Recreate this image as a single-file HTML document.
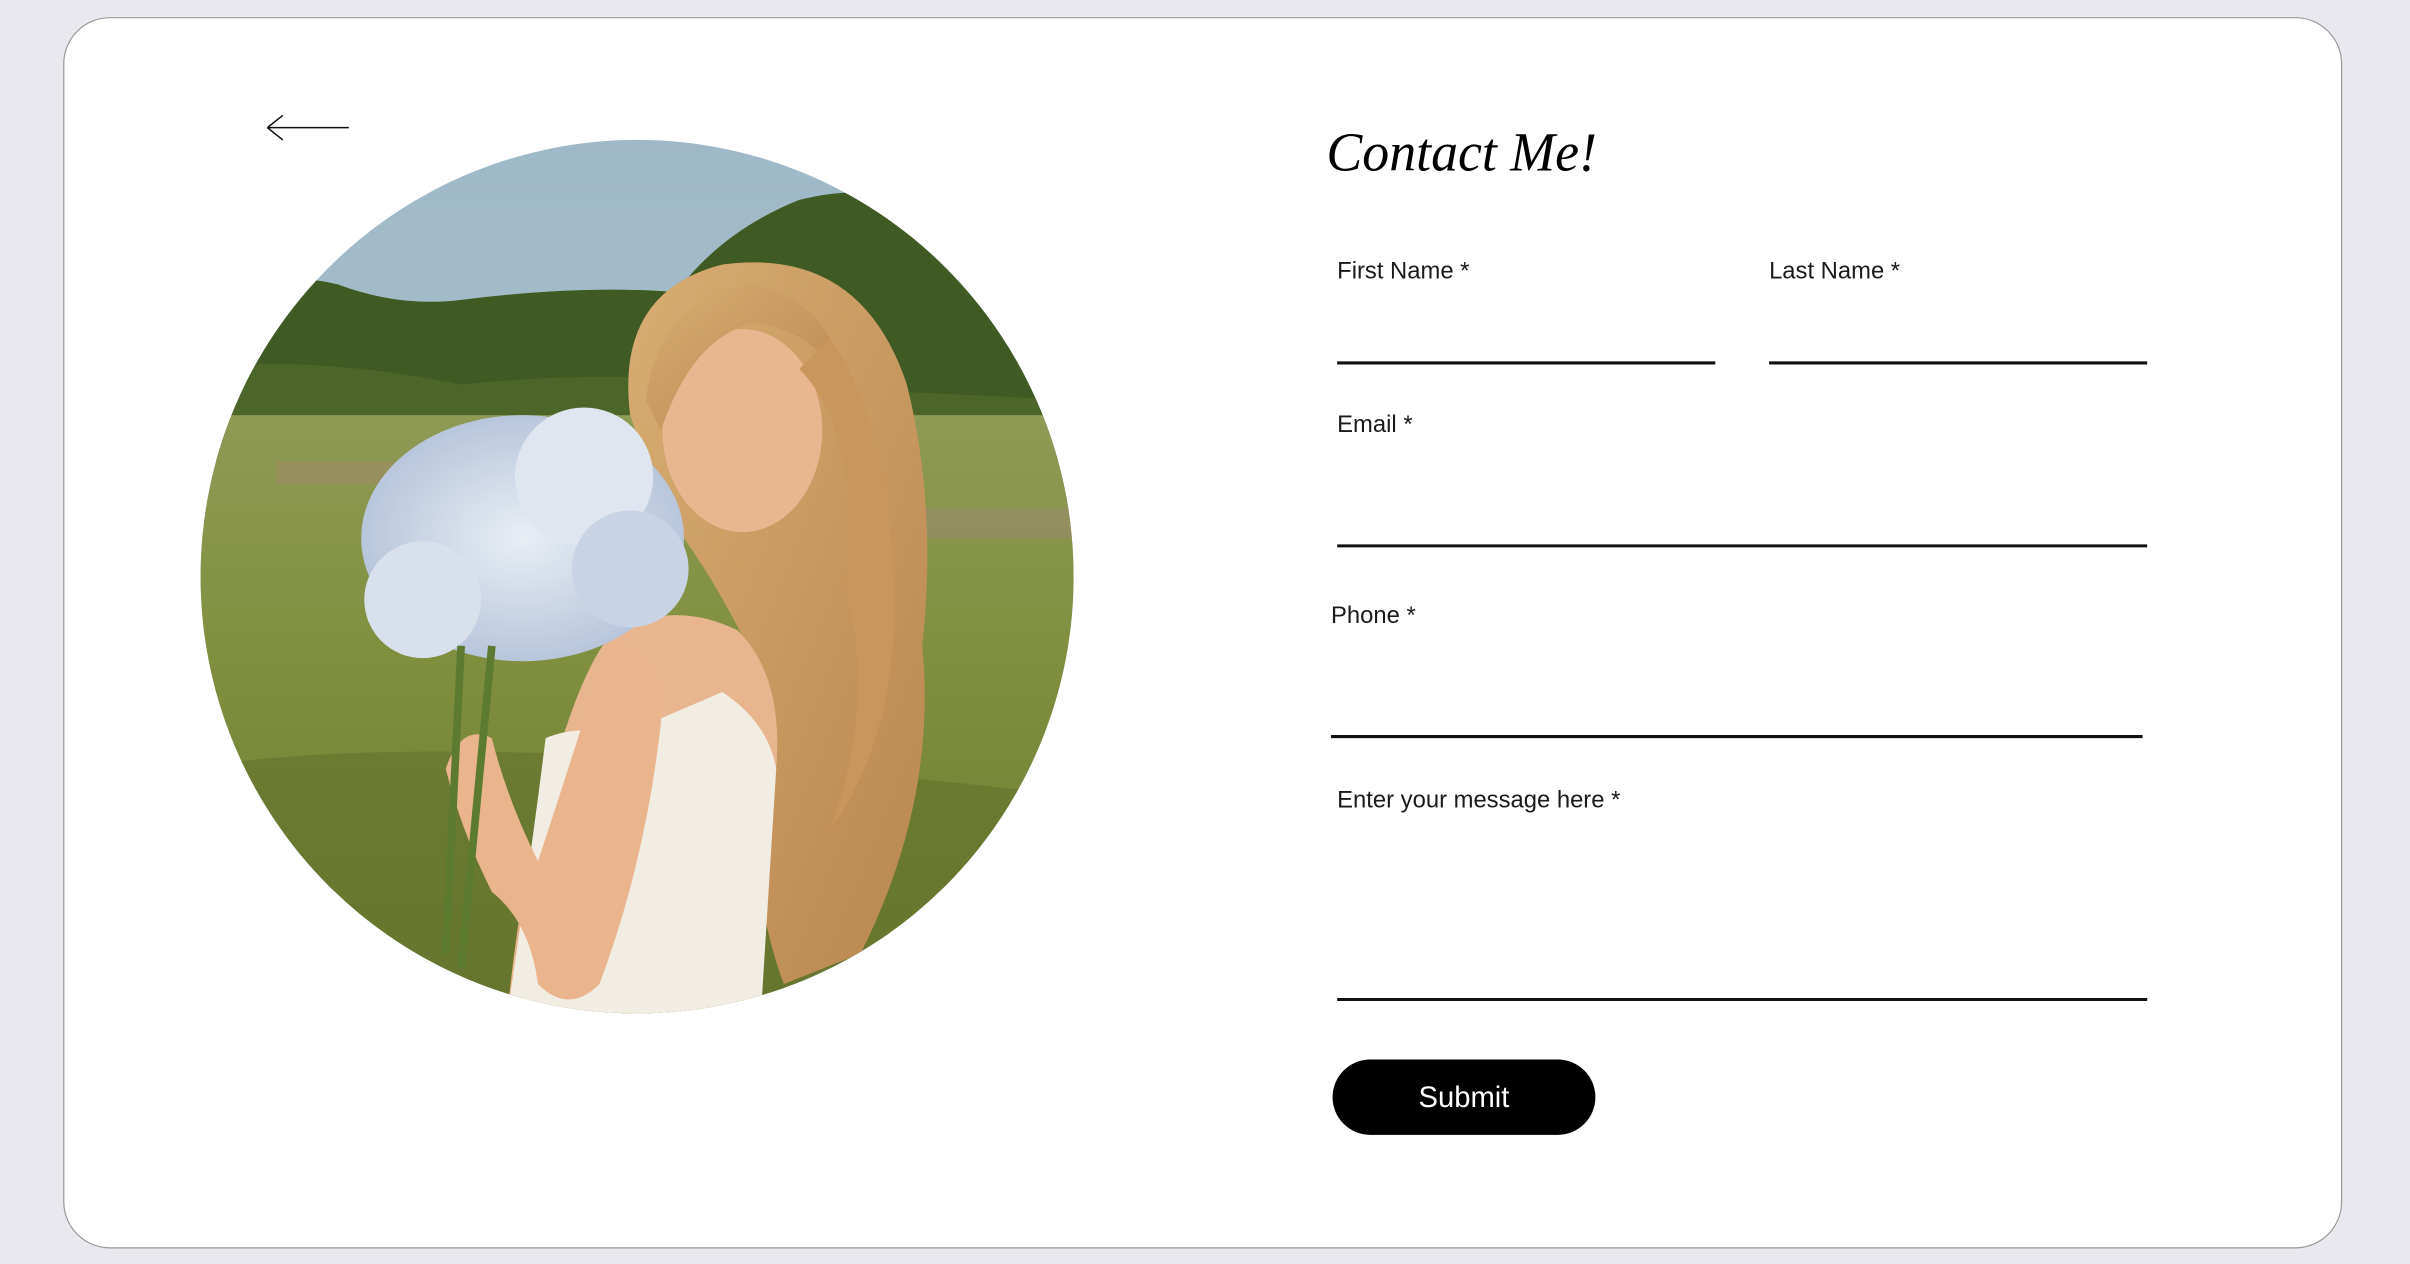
<!DOCTYPE html>
<html><head><meta charset="utf-8"><style>
html,body{margin:0;padding:0;background:#e8e8ee;}
svg{display:block}
</style></head><body>
<svg width="2410" height="1264" viewBox="0 0 1568 822" preserveAspectRatio="none" xmlns="http://www.w3.org/2000/svg">
<defs>
<clipPath id="c"><circle cx="414.5" cy="375" r="284"/></clipPath>
<linearGradient id="sky" x1="0" y1="0" x2="0" y2="1"><stop offset="0" stop-color="#9db8c8"/><stop offset="1" stop-color="#b9c9c8"/></linearGradient>
<linearGradient id="grass" x1="0" y1="0" x2="0" y2="1"><stop offset="0" stop-color="#8f9a55"/><stop offset="0.4" stop-color="#7f8f3e"/><stop offset="1" stop-color="#6a7a30"/></linearGradient>
<linearGradient id="hair" x1="0" y1="0" x2="1" y2="1"><stop offset="0" stop-color="#d8ad72"/><stop offset="1" stop-color="#b98650"/></linearGradient>
<radialGradient id="fl" cx="0.5" cy="0.5" r="0.5"><stop offset="0" stop-color="#e8eef4"/><stop offset="1" stop-color="#b8c6dc"/></radialGradient>
</defs>
<rect width="1568" height="822" fill="#e8e8ee"/>
<rect x="41.5" y="11.5" width="1482" height="800" rx="30" fill="#fff" stroke="#9a9a9a" stroke-width="0.8"/>
<path d="M174 83 H227 M174 83 L184 75 M174 83 L184 91" stroke="#111" stroke-width="1" fill="none"/>
<g clip-path="url(#c)">
<rect x="120" y="80" width="600" height="600" fill="url(#sky)"/>
<path d="M120 300 L120 220 Q160 170 220 185 Q260 200 300 195 Q380 185 440 190 Q470 150 520 130 Q600 110 660 170 Q700 220 710 300 Z" fill="#3f5a22"/>
<path d="M120 290 L120 240 Q200 230 300 250 Q400 240 480 250 L700 260 L710 340 L120 300 Z" fill="#4b6628"/>
<rect x="120" y="270" width="600" height="400" fill="url(#grass)"/>
<path d="M180 300 H310 V315 H180 Z" fill="#a68a6a" opacity="0.5"/>
<path d="M600 330 H700 V350 H600Z" fill="#9b8770" opacity="0.5"/>
<path d="M120 500 Q300 470 720 520 L720 680 L120 680Z" fill="#63722c" opacity="0.6"/>
<path d="M410 270 Q400 190 470 172 Q560 160 590 250 Q610 330 600 420 Q610 520 560 620 L510 640 Q480 560 500 450 Q470 380 430 330Z" fill="url(#hair)"/>
<path d="M400 410 Q440 390 480 410 Q510 440 505 500 L495 660 L330 660 Q340 560 360 500 Q380 430 400 410Z" fill="#e9b58f"/>
<path d="M355 480 Q380 470 400 480 L470 450 Q500 470 505 500 L495 660 L330 660 Q345 560 355 480Z" fill="#f1ede2"/>
<path d="M395 420 Q430 420 430 470 Q420 560 390 640 Q370 660 350 640 Q345 600 320 580 Q300 540 290 500 Q300 470 320 480 Q330 520 350 560 Q370 500 395 420Z" fill="#eab48c"/>
<ellipse cx="483" cy="280" rx="52" ry="66" fill="#eab690"/>
<path d="M420 260 Q430 190 490 185 Q540 195 550 250 Q530 215 490 210 Q450 220 430 280Z" fill="url(#hair)"/>
<path d="M520 240 Q560 280 550 380 Q570 460 540 540 Q590 470 580 360 Q575 270 540 220Z" fill="#c9975c"/>
<ellipse cx="340" cy="350" rx="105" ry="80" fill="url(#fl)"/>
<circle cx="275" cy="390" r="38" fill="#d8e0ec"/>
<circle cx="380" cy="310" r="45" fill="#dfe6ef"/>
<circle cx="410" cy="370" r="38" fill="#c8d4e6"/>
<path d="M300 420 L290 620 M320 420 L300 630" stroke="#5c7a30" stroke-width="5"/>
</g>
<g font-family="'Liberation Sans', sans-serif" fill="#1a1a1a" font-size="15.5">
<text x="863" y="111" font-family="'Liberation Serif', serif" font-style="italic" font-size="36" fill="#000" textLength="176" lengthAdjust="spacingAndGlyphs">Contact Me!</text>
<text x="870" y="181">First Name *</text>
<text x="1151" y="181">Last Name *</text>
<text x="870" y="281">Email *</text>
<text x="866" y="405">Phone *</text>
<text x="870" y="525">Enter your message here *</text>
</g>
<g stroke="#111" stroke-width="2">
<line x1="870" y1="236" x2="1116" y2="236"/>
<line x1="1151" y1="236" x2="1397" y2="236"/>
<line x1="870" y1="355" x2="1397" y2="355"/>
<line x1="866" y1="479" x2="1394" y2="479"/>
<line x1="870" y1="650" x2="1397" y2="650"/>
</g>
<rect x="867" y="689" width="171" height="49" rx="24.5" fill="#000"/>
<text x="952.5" y="720" text-anchor="middle" font-family="'Liberation Sans', sans-serif" font-size="19" fill="#fff">Submit</text>
</svg>
</body></html>
